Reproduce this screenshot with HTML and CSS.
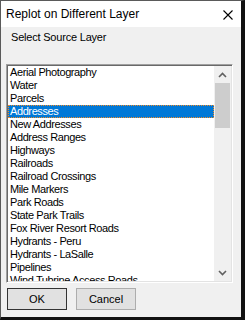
FILE: index.html
```html
<!DOCTYPE html>
<html lang="en">
<head>
    <meta charset="UTF-8">
    <title>Replot on Different Layer</title>
    <link rel="stylesheet" href="styles.css">
</head>
<body>
    <div class="window">
        <div class="titlebar">
            <span class="title">Replot on Different Layer</span>
            <svg class="close" width="10" height="10" viewBox="0 0 10 10">
                <path d="M0.5 0.5 L9.5 9.5 M9.5 0.5 L0.5 9.5" stroke="#000" stroke-width="1.1" fill="none"/>
            </svg>
        </div>

        <div class="content">
            <div class="label">Select Source Layer</div>

            <div class="listbox">
                <ul class="items">
                    <li>Aerial Photography</li>
                    <li>Water</li>
                    <li>Parcels</li>
                    <li class="selected">Addresses</li>
                    <li>New Addresses</li>
                    <li>Address Ranges</li>
                    <li>Highways</li>
                    <li>Railroads</li>
                    <li>Railroad Crossings</li>
                    <li>Mile Markers</li>
                    <li>Park Roads</li>
                    <li>State Park Trails</li>
                    <li>Fox River Resort Roads</li>
                    <li>Hydrants - Peru</li>
                    <li>Hydrants - LaSalle</li>
                    <li>Pipelines</li>
                    <li>Wind Tubrine Access Roads</li>
                </ul>
                <div class="scrollbar">
                    <div class="arrow">
                        <svg width="9" height="6" viewBox="0 0 9 6"><path d="M1 5 L4.5 1.5 L8 5" stroke="#606060" stroke-width="1.6" fill="none"/></svg>
                    </div>
                    <div class="thumb"></div>
                    <div class="track"></div>
                    <div class="arrow">
                        <svg width="9" height="6" viewBox="0 0 9 6"><path d="M1 1 L4.5 4.5 L8 1" stroke="#606060" stroke-width="1.6" fill="none"/></svg>
                    </div>
                </div>
            </div>

            <div class="buttons">
                <button class="btn default">OK</button>
                <button class="btn">Cancel</button>
            </div>
        </div>
    </div>
</body>
</html>
```

FILE: styles.css
```css
body {
    margin: 0;
    padding: 0;
    font-family: "Liberation Sans", Arial, sans-serif;
    background-color: #f0f0f0;
}
.window {
    width: 245px;
    height: 320px;
    box-sizing: border-box;
    border-left: 1px solid #5a5a5a;
    border-top: 1px solid #5a5a5a;
    border-right: 4px solid #111;
    border-bottom: 3px solid #111;
    background-color: #f0f0f0;
    display: flex;
    flex-direction: column;
}
.titlebar {
    height: 26px;
    background-color: #fff;
    display: flex;
    align-items: center;
    justify-content: space-between;
    padding: 0 8px 0 5px;
}
.title {
    font-size: 12px;
    color: #000;
}
.close {
    margin-top: 1px;
}
.content {
    padding: 4px 5px 0 5px;
    font-size: 11px;
    color: #000;
}
.label {
    height: 13px;
    line-height: 13px;
    margin-left: 5px;
    letter-spacing: -0.2px;
}
.listbox {
    margin-top: 20px;
    width: 227px;
    height: 219px;
    box-sizing: border-box;
    border-top: 1px solid #a0a0a0;
    border-left: 1px solid #a0a0a0;
    border-right: 1px solid #fff;
    border-bottom: 1px solid #fff;
    box-shadow: inset 1px 1px 0 #696969, inset -1px -1px 0 #e3e3e3;
    background-color: #fff;
    padding: 1px;
    display: flex;
}
.items {
    list-style: none;
    margin: 0;
    padding: 0;
    flex: 1;
    overflow: hidden;
}
.items li {
    height: 13px;
    line-height: 13px;
    padding-left: 2px;
    white-space: nowrap;
    letter-spacing: -0.4px;
}
.items li.selected {
    background-color: #0078d7;
    color: #fff;
    outline: 1px dotted #f08c28;
    outline-offset: -1px;
}
.scrollbar {
    width: 17px;
    background-color: #f0f0f0;
    display: flex;
    flex-direction: column;
}
.arrow {
    height: 17px;
    display: flex;
    align-items: center;
    justify-content: center;
}
.thumb {
    height: 45px;
    margin: 0 1px;
    background-color: #cdcdcd;
}
.track {
    flex: 1;
}
.buttons {
    display: flex;
    gap: 9px;
    margin-top: 5px;
    margin-left: 1px;
}
.btn {
    width: 60px;
    height: 22px;
    padding: 0;
    font-family: "Liberation Sans", Arial, sans-serif;
    font-size: 11px;
    color: #000;
    background-color: #e1e1e1;
    border: 1px solid #adadad;
}
.btn.default {
    border-color: #333;
}
```
